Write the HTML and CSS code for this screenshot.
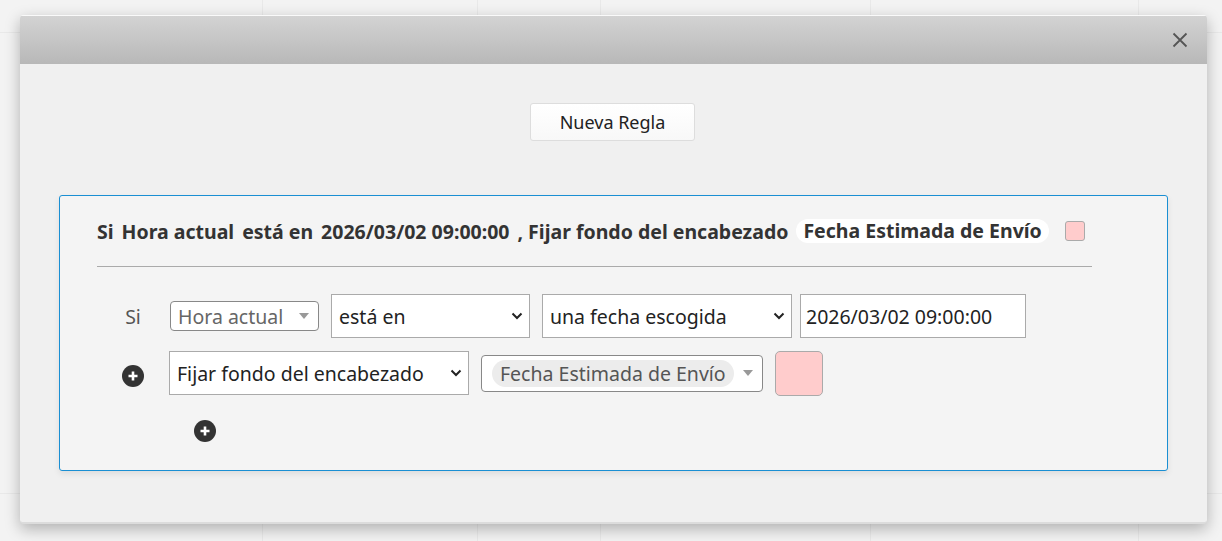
FILE: index.html
```html
<!DOCTYPE html>
<html lang="es">
<head>
<meta charset="utf-8">
<title>Reglas</title>
<link rel="stylesheet" href="styles.css">
</head>
<body>
<div class="page">
  <div class="dialog">
    <div class="dlg-head">
      <button class="close" aria-label="Cerrar">
        <svg width="16" height="16" viewBox="0 0 16 16"><path d="M1.5 1.5 L14.5 14.5 M14.5 1.5 L1.5 14.5" stroke="#555" stroke-width="1.8" fill="none"/></svg>
      </button>
    </div>
    <div class="dlg-body">
      <button class="btn">Nueva Regla</button>
      <div class="rule">
        <div class="summary">
          <span>Si</span>
          <span>Hora actual</span>
          <span>está en</span>
          <span>2026/03/02 09:00:00</span>
          <span>, Fijar fondo del encabezado</span>
          <span class="pill">Fecha Estimada de Envío</span>
          <span class="swatch"></span>
        </div>
        <div class="sep"></div>
        <div class="rows">
          <div class="row">
            <div class="lead">Si</div>
            <div class="mini-sel">
              <span>Hora actual</span>
              <svg class="tri" width="10" height="6" viewBox="0 0 10 6"><path d="M0 0 H10 L5 6 Z" fill="#999"/></svg>
            </div>
            <div class="sel w-esta">
              <span>está en</span>
              <svg class="chev" width="12" height="8" viewBox="0 0 12 8"><path d="M1.5 1.5 L6 6 L10.5 1.5" stroke="#222" stroke-width="2" fill="none"/></svg>
            </div>
            <div class="sel w-fecha">
              <span>una fecha escogida</span>
              <svg class="chev" width="12" height="8" viewBox="0 0 12 8"><path d="M1.5 1.5 L6 6 L10.5 1.5" stroke="#222" stroke-width="2" fill="none"/></svg>
            </div>
            <div class="inp">2026/03/02 09:00:00</div>
          </div>
          <div class="row">
            <div class="lead">
              <svg class="plus-low" width="22" height="22" viewBox="0 0 22 22"><circle cx="11" cy="11" r="11" fill="#333"/><path d="M11 6.5 V15.5 M6.5 11 H15.5" stroke="#fff" stroke-width="2.6"/></svg>
            </div>
            <div class="sel w-fijar">
              <span>Fijar fondo del encabezado</span>
              <svg class="chev" width="12" height="8" viewBox="0 0 12 8"><path d="M1.5 1.5 L6 6 L10.5 1.5" stroke="#222" stroke-width="2" fill="none"/></svg>
            </div>
            <div class="multi">
              <span class="tag">Fecha Estimada de Envío</span>
              <svg class="tri" width="10" height="6" viewBox="0 0 10 6"><path d="M0 0 H10 L5 6 Z" fill="#999"/></svg>
            </div>
            <div class="color"></div>
          </div>
          <div class="row add-row">
            <svg class="plus-add" width="22" height="22" viewBox="0 0 22 22"><circle cx="11" cy="11" r="11" fill="#333"/><path d="M11 6.5 V15.5 M6.5 11 H15.5" stroke="#fff" stroke-width="2.6"/></svg>
          </div>
        </div>
      </div>
    </div>
  </div>
</div>
</body>
</html>
```

FILE: styles.css
```css
html, body {
  margin: 0;
  height: 541px;
  overflow: hidden;
}
body {
  font-family: "Noto Sans", "Open Sans", sans-serif;
  background-color: #f3f3f3;
  background-image:
    linear-gradient(#e9e9e9, #e9e9e9),
    linear-gradient(#e9e9e9, #e9e9e9),
    linear-gradient(#e9e9e9, #e9e9e9),
    linear-gradient(#e9e9e9, #e9e9e9),
    linear-gradient(#e9e9e9, #e9e9e9),
    linear-gradient(#e9e9e9, #e9e9e9),
    linear-gradient(#e9e9e9, #e9e9e9);
  background-size: 1px 100%, 1px 100%, 1px 100%, 1px 100%, 1px 100%, 100% 1px, 100% 1px;
  background-position: 262px 0, 477px 0, 600px 0, 870px 0, 1138px 0, 0 32px, 0 493px;
  background-repeat: no-repeat;
}
.page {
  padding: 15px 0 0 20px;
}
.dialog {
  width: 1187px;
  height: 509px;
  box-sizing: border-box;
  border-radius: 4px;
  background: #f0f0f0;
  border-bottom: 2px solid #dcdcdc;
  box-shadow: 0 5px 15px rgba(0, 0, 0, 0.28);
  display: flex;
  flex-direction: column;
  overflow: hidden;
}
.dlg-head {
  height: 48px;
  border-top: 1px solid #fafafa;
  background: linear-gradient(#d3d3d3, #b8b8b8);
  display: flex;
  align-items: center;
  justify-content: flex-end;
  padding-right: 19px;
  flex: none;
}
.close {
  border: 0;
  background: transparent;
  padding: 0;
  width: 16px;
  height: 16px;
  display: flex;
}
.dlg-body {
  flex: 1;
  padding: 39px 39px 0;
  display: flex;
  flex-direction: column;
}
.btn {
  align-self: center;
  width: 165px;
  height: 38px;
  margin-left: -2px;
  background: linear-gradient(#ffffff, #f8f8f8);
  border: 1px solid #dddddd;
  border-radius: 3px;
  font-family: "Noto Sans", "Open Sans", sans-serif;
  font-size: 18px;
  color: #222;
  padding: 0;
}
.rule {
  margin-top: 54px;
  height: 276px;
  box-sizing: border-box;
  border: 1px solid #1a8fd3;
  border-radius: 3px;
  background: #f4f4f4;
  box-shadow: 0 3px 6px rgba(0, 0, 0, 0.08);
  padding: 23px 0 0 37px;
}
.summary {
  display: flex;
  align-items: center;
  gap: 8px;
  height: 24px;
  font-size: 19.5px;
  font-weight: 700;
  color: #333;
  white-space: nowrap;
}
.pill {
  background: #fff;
  border-radius: 12px;
  padding: 0 7px;
  line-height: 24px;
}
.swatch {
  width: 18px;
  height: 18px;
  margin-left: 8px;
  background: #ffcccc;
  border: 1px solid #aaa;
  border-radius: 3px;
}
.sep {
  width: 995px;
  height: 1px;
  background: #aaa;
  margin-top: 23px;
}
.rows {
  margin-top: 27px;
  display: flex;
  flex-direction: column;
  gap: 13px;
}
.row {
  display: flex;
  align-items: center;
  height: 44px;
  font-size: 19.5px;
  color: #222;
}
.lead {
  width: 72px;
  display: flex;
  justify-content: center;
  color: #555;
}
.plus-low {
  margin-top: 6px;
}
.mini-sel {
  width: 149px;
  height: 30px;
  box-sizing: border-box;
  margin-left: 1px;
  border: 1px solid #888;
  border-radius: 4px;
  background: #fff;
  color: #666;
  display: flex;
  align-items: center;
  justify-content: space-between;
  padding: 0 9px 0 7px;
}
.sel {
  height: 44px;
  box-sizing: border-box;
  border: 1px solid #aaa;
  background: #fff;
  display: flex;
  align-items: center;
  justify-content: space-between;
  padding: 0 6px 0 7px;
  margin-left: 12px;
}
.w-esta { width: 199px; }
.w-fecha { width: 250px; }
.w-fijar { width: 300px; margin-left: 0; }
.inp {
  width: 226px;
  height: 44px;
  box-sizing: border-box;
  margin-left: 8px;
  border: 1px solid #aaa;
  background: #fff;
  padding: 0 5px;
  display: flex;
  align-items: center;
}
.multi {
  width: 282px;
  height: 37px;
  box-sizing: border-box;
  margin-left: 12px;
  border: 1px solid #888;
  border-radius: 4px;
  background: #fff;
  display: flex;
  align-items: center;
  justify-content: space-between;
  padding: 0 9px 0 10px;
}
.tag {
  background: #ececec;
  color: #555;
  border-radius: 14px;
  padding: 0 8px;
  line-height: 27px;
}
.color {
  width: 48px;
  height: 45px;
  box-sizing: border-box;
  margin-left: 12px;
  background: #ffcccc;
  border: 1px solid #aaa;
  border-radius: 5px;
}
.add-row {
  padding-left: 97px;
}
.plus-add {
  margin-top: 2px;
}
```
